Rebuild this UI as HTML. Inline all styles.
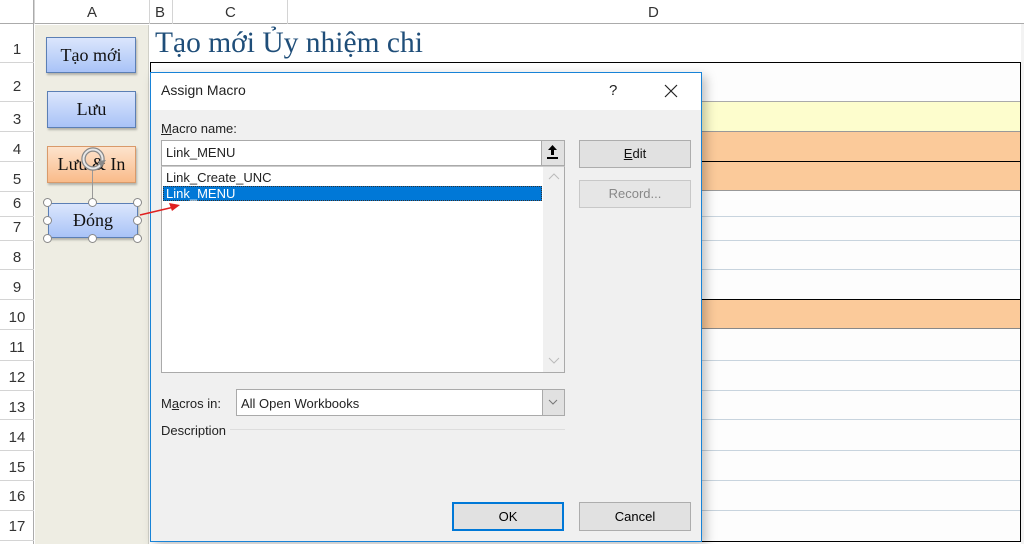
<!DOCTYPE html>
<html><head><meta charset="utf-8"><style>
*{margin:0;padding:0;box-sizing:border-box}
body{width:1024px;height:544px;overflow:hidden;background:#fff;position:relative;font-family:"Segoe UI","Liberation Sans",sans-serif}
.a{position:absolute}
.hl{position:absolute;height:1px;background:#d4d4d4}
.rn{position:absolute;left:0;width:34px;text-align:center;font-size:15px;color:#333;font-family:"Liberation Sans",sans-serif}
.ch{position:absolute;top:4px;font-size:15px;color:#333;font-family:"Liberation Sans",sans-serif}
.btn{position:absolute;border:1px solid #5b7fb5;background:linear-gradient(#dbe6fc,#a9c3f7);font-family:"Liberation Serif",serif;font-size:18px;text-align:center;color:#111;box-shadow:1px 2px 2px rgba(0,0,0,.25)}
.dl{font-family:"Liberation Sans",sans-serif;font-size:13px;color:#222}
.wb{position:absolute;background:#e1e1e1;border:1px solid #adadad;text-align:center;font-size:13px;font-family:"Liberation Sans",sans-serif}
.h{position:absolute;width:9px;height:9px;border:1px solid #888;border-radius:50%;background:#fff}
</style></head><body>
<div class="a" style="left:0;top:0;width:1024px;height:24px;background:#fff;border-bottom:1px solid #ababab"></div>
<div class="a" style="left:0;top:0;width:34px;height:544px;border-right:1px solid #ababab"></div>
<div class="a" style="left:34px;top:0;width:1px;height:24px;background:#d4d4d4"></div>
<div class="a" style="left:149px;top:0;width:1px;height:24px;background:#d4d4d4"></div>
<div class="a" style="left:172px;top:0;width:1px;height:24px;background:#d4d4d4"></div>
<div class="a" style="left:287px;top:0;width:1px;height:24px;background:#d4d4d4"></div>
<div class="ch" style="left:87px">A</div><div class="ch" style="left:155px">B</div><div class="ch" style="left:225px">C</div><div class="ch" style="left:648px">D</div>
<div class="rn" style="top:41px">1</div><div class="rn" style="top:78px">2</div><div class="rn" style="top:111px">3</div><div class="rn" style="top:141px">4</div><div class="rn" style="top:171px">5</div><div class="rn" style="top:195px">6</div><div class="rn" style="top:219px">7</div><div class="rn" style="top:249px">8</div><div class="rn" style="top:279px">9</div><div class="rn" style="top:309px">10</div><div class="rn" style="top:339px">11</div><div class="rn" style="top:369px">12</div><div class="rn" style="top:399px">13</div><div class="rn" style="top:429px">14</div><div class="rn" style="top:459px">15</div><div class="rn" style="top:488px">16</div><div class="rn" style="top:518px">17</div>
<div class="hl" style="left:0;width:34px;top:62px"></div><div class="hl" style="left:0;width:34px;top:101px"></div><div class="hl" style="left:0;width:34px;top:131px"></div><div class="hl" style="left:0;width:34px;top:161px"></div><div class="hl" style="left:0;width:34px;top:191px"></div><div class="hl" style="left:0;width:34px;top:216px"></div><div class="hl" style="left:0;width:34px;top:240px"></div><div class="hl" style="left:0;width:34px;top:269px"></div><div class="hl" style="left:0;width:34px;top:299px"></div><div class="hl" style="left:0;width:34px;top:329px"></div><div class="hl" style="left:0;width:34px;top:360px"></div><div class="hl" style="left:0;width:34px;top:390px"></div><div class="hl" style="left:0;width:34px;top:419px"></div><div class="hl" style="left:0;width:34px;top:450px"></div><div class="hl" style="left:0;width:34px;top:480px"></div><div class="hl" style="left:0;width:34px;top:510px"></div><div class="hl" style="left:0;width:34px;top:540px"></div>
<div class="a" style="left:35px;top:25px;width:114px;height:519px;background:#eeede3;border-right:1px solid #d0d0c8"></div>
<div class="a" style="left:155px;top:27px;font-family:'Liberation Serif',serif;font-size:29.5px;color:#1f4e79">Tạo mới Ủy nhiệm chi</div>
<div class="a" style="left:1021px;top:24px;width:3px;height:520px;background:#f3f3f3"></div>
<div class="a" style="left:150px;top:62px;width:871px;height:480px;border:1px solid #000;background:#fdfdfd"></div>
<div class="a" style="left:151px;top:101px;width:869px;height:30px;background:#fdfdcd;border-top:1px solid #aaa"></div>
<div class="a" style="left:151px;top:131px;width:869px;height:30px;background:#fbca9a;border-top:1px solid #999"></div>
<div class="a" style="left:151px;top:161px;width:869px;height:30px;background:#fbca9a;border-top:1px solid #000;border-bottom:1px solid #999"></div>
<div class="hl" style="left:151px;width:869px;top:216px;background:#c8d4de"></div><div class="hl" style="left:151px;width:869px;top:240px;background:#c8d4de"></div><div class="hl" style="left:151px;width:869px;top:269px;background:#c8d4de"></div>
<div class="a" style="left:151px;top:299px;width:869px;height:30px;background:#fbca9a;border-top:1px solid #000;border-bottom:1px solid #888"></div>
<div class="hl" style="left:151px;width:869px;top:360px;background:#c8d4de"></div><div class="hl" style="left:151px;width:869px;top:390px;background:#c8d4de"></div><div class="hl" style="left:151px;width:869px;top:419px;background:#c8d4de"></div><div class="hl" style="left:151px;width:869px;top:450px;background:#c8d4de"></div><div class="hl" style="left:151px;width:869px;top:480px;background:#c8d4de"></div><div class="hl" style="left:151px;width:869px;top:510px;background:#c8d4de"></div>
<div class="btn" style="left:46px;top:37px;width:90px;height:36px;line-height:34px">Tạo mới</div>
<div class="btn" style="left:47px;top:91px;width:89px;height:37px;line-height:35px">Lưu</div>
<div class="btn" style="left:47px;top:146px;width:89px;height:37px;line-height:35px;border-color:#d99a6a;background:linear-gradient(#fde3cc,#f9bb8a)">Lưu &amp; In</div>
<div class="btn" style="left:48px;top:203px;width:90px;height:35px;line-height:33px">Đóng</div>
<div class="a" style="left:92px;top:170px;width:1px;height:33px;background:#999"></div>
<svg class="a" style="left:79px;top:145px" width="28" height="28" viewBox="0 0 28 28"><circle cx="14" cy="14" r="9.5" fill="none" stroke="#888" stroke-width="4.5"/><circle cx="14" cy="14" r="9.5" fill="none" stroke="#e8e8e8" stroke-width="2"/><path d="M19 16 L27 15 L22 22Z" fill="#888"/></svg>
<div class="h" style="left:43px;top:198px"></div><div class="h" style="left:88px;top:198px"></div><div class="h" style="left:133px;top:198px"></div>
<div class="h" style="left:43px;top:216px"></div><div class="h" style="left:133px;top:216px"></div>
<div class="h" style="left:43px;top:234px"></div><div class="h" style="left:88px;top:234px"></div><div class="h" style="left:133px;top:234px"></div>
<div class="a" style="left:150px;top:72px;width:552px;height:470px;border:1px solid #1883d7;background:#f0f0f0;box-shadow:4px 4px 10px rgba(0,0,0,.25)"></div>
<div class="a" style="left:151px;top:73px;width:550px;height:37px;background:#fff"></div>
<div class="a dl" style="left:161px;top:82px;font-size:14px">Assign Macro</div>
<div class="a dl" style="left:609px;top:82px;font-size:15px">?</div>
<svg class="a" style="left:664px;top:84px" width="14" height="14"><path d="M1 1L13 13M13 1L1 13" stroke="#222" stroke-width="1.2"/></svg>
<div class="a dl" style="left:161px;top:121px"><u>M</u>acro name:</div>
<div class="a" style="left:161px;top:140px;width:404px;height:26px;background:#fff;border:1px solid #aaa"></div>
<div class="a dl" style="left:166px;top:145px">Link_MENU</div>
<div class="a" style="left:541px;top:141px;width:23px;height:24px;background:#e1e1e1;border-left:1px solid #aaa"></div>
<svg class="a" style="left:546px;top:144px" width="13" height="16"><path d="M6.5 1L2 6H5V11H8V6H11Z" fill="#000"/><rect x="1" y="13" width="11" height="2" fill="#000"/></svg>
<div class="a" style="left:161px;top:166px;width:404px;height:207px;background:#fff;border:1px solid #aaa;border-top-color:#ccc"></div>
<div class="a" style="left:543px;top:167px;width:21px;height:205px;background:#f0f0f0"></div>
<svg class="a" style="left:548px;top:173px" width="12" height="8"><path d="M1 6L6 1L11 6" stroke="#bbb" fill="none"/></svg>
<svg class="a" style="left:548px;top:357px" width="12" height="8"><path d="M1 1L6 6L11 1" stroke="#bbb" fill="none"/></svg>
<div class="a dl" style="left:166px;top:170px">Link_Create_UNC</div>
<div class="a" style="left:163px;top:186px;width:379px;height:15px;background:#0078d7;border:1px dotted #333"></div>
<div class="a dl" style="left:166px;top:186px;color:#fff">Link_MENU</div>
<div class="wb" style="left:579px;top:140px;width:112px;height:28px;line-height:26px;color:#111"><u>E</u>dit</div>
<div class="wb" style="left:579px;top:180px;width:112px;height:28px;line-height:26px;color:#888;border-color:#c8c8c8;background:#e6e6e6">Record...</div>
<div class="a dl" style="left:161px;top:396px">M<u>a</u>cros in:</div>
<div class="a" style="left:236px;top:389px;width:329px;height:27px;background:#fff;border:1px solid #aaa"></div>
<div class="a" style="left:542px;top:390px;width:22px;height:25px;background:#e1e1e1;border-left:1px solid #aaa"></div>
<svg class="a" style="left:548px;top:399px" width="10" height="6"><path d="M1 1L5 5L9 1" stroke="#777" fill="none"/></svg>
<div class="a dl" style="left:241px;top:396px">All Open Workbooks</div>
<div class="a dl" style="left:161px;top:423px">Description</div>
<div class="a" style="left:230px;top:429px;width:335px;height:1px;background:#ddd"></div>
<div class="wb" style="left:452px;top:502px;width:112px;height:29px;line-height:25px;border:2px solid #0078d7">OK</div>
<div class="wb" style="left:579px;top:502px;width:112px;height:29px;line-height:27px">Cancel</div>
<svg class="a" style="left:136px;top:198px" width="50" height="22"><path d="M4 17L38 9" stroke="#e02020" stroke-width="1.6"/><path d="M44 7L33 5L36 13Z" fill="#e02020"/></svg>
</body></html>
